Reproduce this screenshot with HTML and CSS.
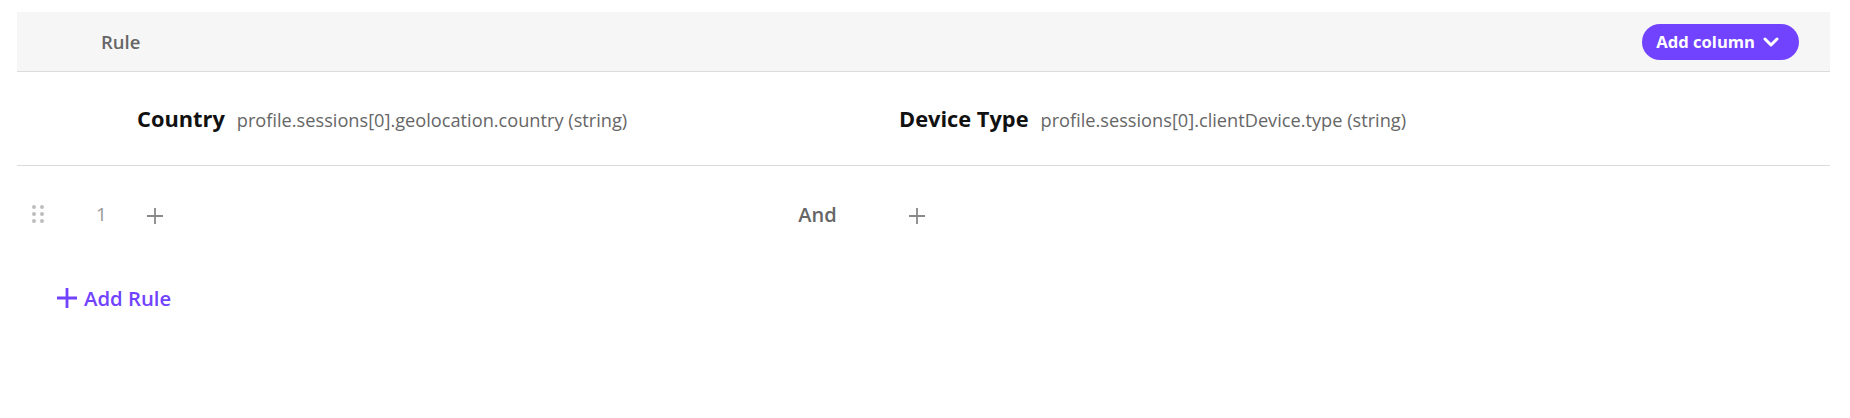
FILE: index.html
```html
<!doctype html>
<html lang="en">
  <head>
    <meta charset="UTF-8" />
    <meta name="viewport" content="width=device-width, initial-scale=1.0" />
    <title>Rules</title>
    <link rel="stylesheet" href="styles.css">
  </head>
  <body>
    <div class="rules-table">
      <div class="table-head">
        <span class="head-label">Rule</span>
        <button class="add-column">
          Add column
          <svg width="16" height="16" viewBox="0 0 16 16">
            <path d="M2 5 L8 11 L14 5" fill="none" stroke="#fff" stroke-width="3" stroke-linecap="round" stroke-linejoin="round" />
          </svg>
        </button>
      </div>

      <div class="grid-row columns-row">
        <div></div>
        <div></div>
        <div class="column-title">
          <span class="column-name">Country</span>
          <span class="column-path">profile.sessions[0].geolocation.country (string)</span>
        </div>
        <div></div>
        <div class="column-title">
          <span class="column-name">Device Type</span>
          <span class="column-path">profile.sessions[0].clientDevice.type (string)</span>
        </div>
      </div>

      <div class="grid-row rule-row">
        <div class="drag-handle">
          <span></span><span></span>
          <span></span><span></span>
          <span></span><span></span>
        </div>
        <div class="rule-num">1</div>
        <div class="cell">
          <button class="plus-btn">
            <svg width="16" height="16" viewBox="0 0 16 16">
              <path d="M8 0 V16 M0 8 H16" stroke="#888" stroke-width="1.8" />
            </svg>
          </button>
        </div>
        <div class="joiner">And</div>
        <div class="cell">
          <button class="plus-btn">
            <svg width="16" height="16" viewBox="0 0 16 16">
              <path d="M8 0 V16 M0 8 H16" stroke="#888" stroke-width="1.8" />
            </svg>
          </button>
        </div>
      </div>

      <button class="add-rule">
        <svg width="20" height="20" viewBox="0 0 20 20">
          <path d="M10 0 V20 M0 10 H20" stroke="#7143ff" stroke-width="2.8" />
        </svg>
        Add Rule
      </button>
    </div>
  </body>
</html>
```

FILE: styles.css
```css
body {
  margin: 0;
  padding: 12px 20px 0 17px;
  font-family: "Open Sans", Arial, sans-serif;
  background: #fff;
}
button {
  font-family: inherit;
  border: none;
  background: none;
  cursor: pointer;
  padding: 0;
}
.table-head {
  display: flex;
  align-items: center;
  justify-content: space-between;
  height: 59px;
  padding: 0 31px 0 84px;
  background: #f6f6f6;
  border-bottom: 1px solid #dcdcdc;
}
.head-label {
  font-size: 18.5px;
  font-weight: 600;
  color: #666;
}
.add-column {
  display: flex;
  align-items: center;
  gap: 8px;
  height: 36px;
  padding: 0 20px 0 14px;
  border-radius: 18px;
  background: #7143ff;
  color: #fff;
  font-size: 16.6px;
  font-weight: 700;
}
.grid-row {
  display: grid;
  grid-template-columns: 60px 60px 599px 163px 1fr;
  align-items: center;
}
.columns-row {
  height: 93px;
  border-bottom: 1px solid #dcdcdc;
}
.column-title {
  display: flex;
  align-items: baseline;
  gap: 12px;
  white-space: nowrap;
}
.column-name {
  font-size: 21.8px;
  font-weight: 700;
  color: #111;
}
.column-path {
  font-size: 18.2px;
  color: #666;
}
.rule-row {
  height: 96px;
}
.drag-handle {
  display: grid;
  grid-template-columns: 4px 4px;
  gap: 3px 4px;
  padding-left: 15px;
}
.drag-handle span {
  width: 4px;
  height: 4px;
  border-radius: 50%;
  background: #bdbdbd;
}
.rule-num {
  padding-left: 19px;
  font-size: 19px;
  color: #999;
}
.cell {
  padding-left: 10px;
}
.plus-btn {
  display: flex;
  padding-top: 4px;
}
.joiner {
  text-align: center;
  font-size: 20px;
  font-weight: 600;
  color: #666;
}
.add-rule {
  display: flex;
  align-items: center;
  gap: 7px;
  margin: 22px 0 0 40px;
  font-size: 20.3px;
  font-weight: 600;
  color: #7143ff;
}
```
